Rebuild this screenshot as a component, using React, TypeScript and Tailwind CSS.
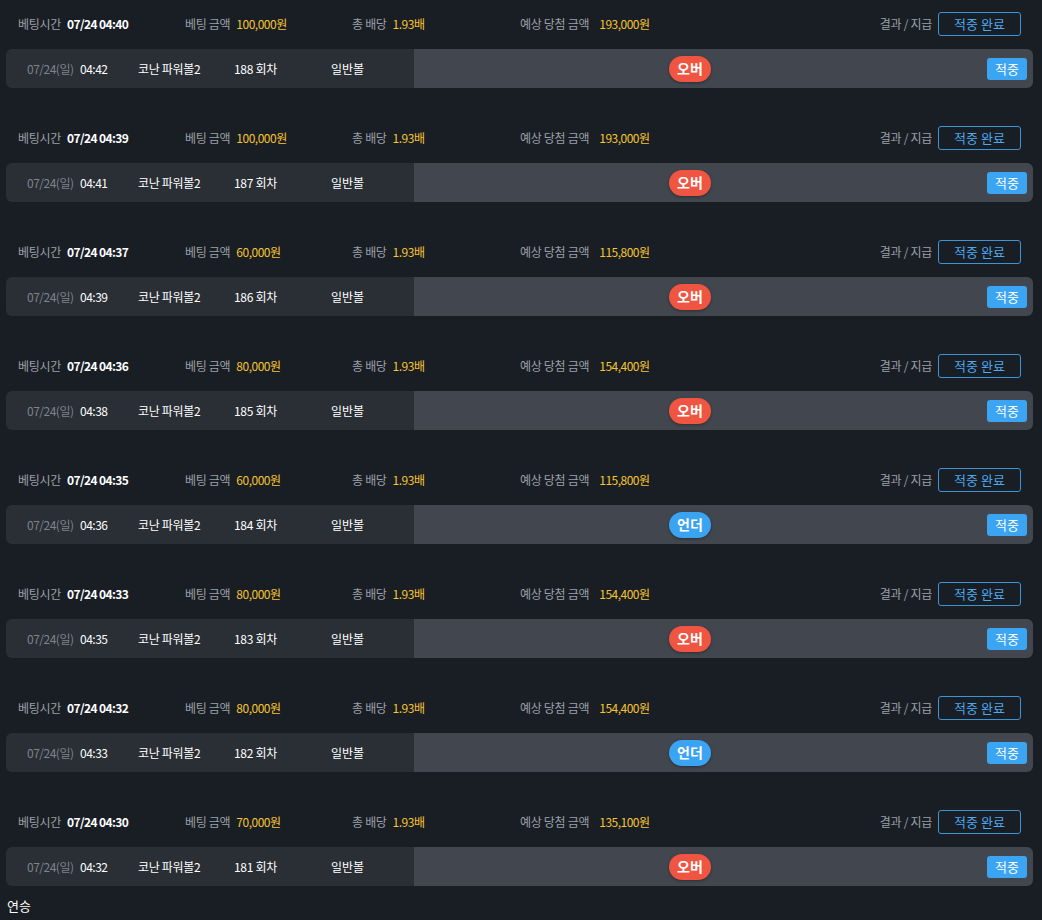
import React from "react";

type Bet = {
  betTime: string;
  amount: string;
  payout: string;
  date: string;
  time: string;
  round: number;
  pick: "오버" | "언더";
};

const bets: Bet[] = [
  { betTime: "07/24 04:40", amount: "100,000원", payout: "193,000원", date: "07/24(일)", time: "04:42", round: 188, pick: "오버" },
  { betTime: "07/24 04:39", amount: "100,000원", payout: "193,000원", date: "07/24(일)", time: "04:41", round: 187, pick: "오버" },
  { betTime: "07/24 04:37", amount: "60,000원", payout: "115,800원", date: "07/24(일)", time: "04:39", round: 186, pick: "오버" },
  { betTime: "07/24 04:36", amount: "80,000원", payout: "154,400원", date: "07/24(일)", time: "04:38", round: 185, pick: "오버" },
  { betTime: "07/24 04:35", amount: "60,000원", payout: "115,800원", date: "07/24(일)", time: "04:36", round: 184, pick: "언더" },
  { betTime: "07/24 04:33", amount: "80,000원", payout: "154,400원", date: "07/24(일)", time: "04:35", round: 183, pick: "오버" },
  { betTime: "07/24 04:32", amount: "80,000원", payout: "154,400원", date: "07/24(일)", time: "04:33", round: 182, pick: "언더" },
  { betTime: "07/24 04:30", amount: "70,000원", payout: "135,100원", date: "07/24(일)", time: "04:32", round: 181, pick: "오버" },
];

// 베팅 내역 한 건 — 상단 요약줄 + 회차 바
function BetRow({ bet }: { bet: Bet }) {
  const over = bet.pick === "오버";
  return (
    <div className="h-[114px]">
      <div className="flex h-[47px] items-center pl-[18px] pr-[21px] text-[12px]">
        <div className="flex w-[167px] items-center gap-[6px]">
          <span className="tracking-[-0.3px] text-[#9aa0a8]">베팅시간</span>
          <span className="font-semibold tracking-[-0.6px] text-white">{bet.betTime}</span>
        </div>
        <div className="flex w-[167px] items-center gap-[6px]">
          <span className="tracking-[-0.3px] text-[#9aa0a8]">베팅 금액</span>
          <span className="tracking-[-0.5px] text-[#f5c431]">{bet.amount}</span>
        </div>
        <div className="flex w-[168px] items-center gap-[6px]">
          <span className="tracking-[-0.3px] text-[#9aa0a8]">총 배당</span>
          <span className="tracking-[-0.5px] text-[#f5c431]">1.93배</span>
        </div>
        <div className="flex flex-1 items-center gap-[10px]">
          <span className="tracking-[-0.3px] text-[#9aa0a8]">예상 당첨 금액</span>
          <span className="tracking-[-0.5px] text-[#f5c431]">{bet.payout}</span>
        </div>
        <div className="flex items-center gap-[6px]">
          <span className="tracking-[-0.3px] text-[#9aa0a8]">결과 / 지급</span>
          <span className="flex h-[24px] w-[83px] items-center justify-center rounded-[3px] border border-[#3b95d9] text-[13px] text-[#4ba9f0]">
            적중 완료
          </span>
        </div>
      </div>
      <div className="mx-[6px] mt-[2px] flex h-[39px] w-[1027px] overflow-hidden rounded-[6px] text-[12px]">
        <div className="flex w-[408px] items-center bg-[#2a2e35] pl-[21px]">
          <span className="w-[53px] tracking-[-0.5px] text-[#7d838b]">{bet.date}</span>
          <span className="w-[58px] tracking-[-0.5px] text-white">{bet.time}</span>
          <span className="w-[96px] tracking-[-0.3px] text-white">코난 파워볼2</span>
          <span className="w-[97px] tracking-[-0.3px] text-white">{bet.round} 회차</span>
          <span className="text-white">일반볼</span>
        </div>
        <div className="flex flex-1 items-center bg-[#42464e] pl-[255px] pr-[6px]">
          <span
            className={
              over
                ? "flex h-[26px] w-[42px] items-center justify-center rounded-full bg-[#ef5540] text-[14px] font-bold text-white shadow-[0_1px_3px_rgba(0,0,0,0.35)]"
                : "flex h-[26px] w-[42px] items-center justify-center rounded-full bg-[#3aa4f2] text-[14px] font-bold text-white shadow-[0_1px_3px_rgba(0,0,0,0.35)]"
            }
          >
            {bet.pick}
          </span>
          <span className="ml-auto flex h-[22px] w-[40px] items-center justify-center rounded-[3px] bg-[#3ba5f3] text-[13px] text-white">
            적중
          </span>
        </div>
      </div>
    </div>
  );
}

export default function App() {
  return (
    <div
      className="h-[920px] w-[1042px] overflow-hidden bg-[#191d24]"
      style={{ fontFamily: '"Noto Sans CJK KR", "Noto Sans", sans-serif' }}
    >
      {bets.map((b) => (
        <BetRow key={b.round} bet={b} />
      ))}
      <div className="-mt-[16px] pl-[7px] text-[13px] text-white">연승</div>
    </div>
  );
}
